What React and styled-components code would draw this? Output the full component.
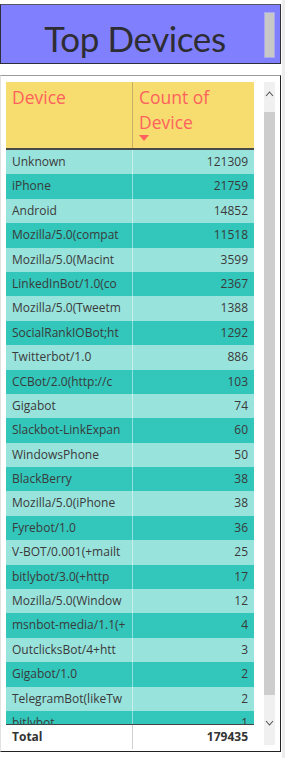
import React from "react";
import styled, { createGlobalStyle } from "styled-components";

const GlobalStyle = createGlobalStyle`
  html, body { margin: 0; padding: 0; background: #fff; }
  body { font-family: "Segoe UI", "Open Sans", "Noto Sans", sans-serif; }
`;

const rows = [
  ["Unknown", 121309],
  ["iPhone", 21759],
  ["Android", 14852],
  ["Mozilla/5.0(compat", 11518],
  ["Mozilla/5.0(Macint", 3599],
  ["LinkedInBot/1.0(co", 2367],
  ["Mozilla/5.0(Tweetm", 1388],
  ["SocialRankIOBot;ht", 1292],
  ["Twitterbot/1.0", 886],
  ["CCBot/2.0(http://c", 103],
  ["Gigabot", 74],
  ["Slackbot-LinkExpan", 60],
  ["WindowsPhone", 50],
  ["BlackBerry", 38],
  ["Mozilla/5.0(iPhone", 38],
  ["Fyrebot/1.0", 36],
  ["V-BOT/0.001(+mailt", 25],
  ["bitlybot/3.0(+http", 17],
  ["Mozilla/5.0(Window", 12],
  ["msnbot-media/1.1(+", 4],
  ["OutclicksBot/4+htt", 3],
  ["Gigabot/1.0", 2],
  ["TelegramBot(likeTw", 2],
  ["bitlybot", 1],
];

const Page = styled.div`
  display: flex;
  width: 287px;
  height: 758px;
  overflow: hidden;
`;

const Main = styled.div`
  width: 281px;
  display: flex;
  flex-direction: column;
  padding-top: 4px;
  gap: 11px;
`;

const EdgeStrip = styled.div`
  width: 3px;
  margin-left: 1px;
  background: #ececec;
`;

const TitleCard = styled.div`
  position: relative;
  box-sizing: border-box;
  height: 60px;
  background: #8080ff;
  border: 1px solid #2f2f3c;
  border-top-color: #55556a;
  display: flex;
  align-items: center;
  justify-content: center;
  padding-right: 11px;
`;

const Title = styled.h1`
  margin: 0;
  margin-top: 7px;
  font-family: "Segoe UI", Lato, "Open Sans", sans-serif;
  font-weight: 400;
  font-size: 35px;
  line-height: 44px;
  letter-spacing: -0.4px;
  color: #2d2d33;
`;

const TitleThumb = styled.div`
  position: absolute;
  right: 5px;
  top: 7px;
  width: 9px;
  height: 44px;
  background: #c8c8c8;
  border: 1px solid #a8a8ee;
`;

const TablePanel = styled.div`
  box-sizing: border-box;
  height: 677px;
  border-top: 1px solid #9a9a9a;
  border-right: 1px solid #222;
  border-bottom: 1px solid #222;
  border-left: 1px solid #e2e2e2;
  padding: 6px 5px 0 5px;
  display: flex;
  gap: 10px;
`;

const Table = styled.div`
  width: 248px;
  display: flex;
  flex-direction: column;
`;

const Grid = styled.div`
  display: grid;
  grid-template-columns: 126px 122px;
`;

const Header = styled(Grid)`
  height: 66px;
  background: #f7dc6f;
  border-bottom: 2px solid #4a4a4a;
`;

const HeadCell = styled.div`
  padding: 3px 6px 0 6px;
  font-size: 17.5px;
  line-height: 24.5px;
  color: #fd625e;
  border-left: ${(p) => (p.$first ? "none" : "1px solid #c4b067")};
`;

const SortArrow = styled.div`
  width: 0;
  height: 0;
  margin-top: 1px;
  border-left: 5px solid transparent;
  border-right: 5px solid transparent;
  border-top: 6px solid #fd625e;
`;

const Body = styled.div`
  height: 574px;
  overflow: hidden;
`;

const Row = styled(Grid)`
  height: 24.4px;
  background: ${(p) => (p.$alt ? "#33c6bb" : "#99e3dd")};
`;

const Cell = styled.div`
  font-size: 12px;
  line-height: 24.4px;
  color: #3a3a3a;
  padding: 0 6px;
  white-space: nowrap;
  overflow: hidden;
  text-align: ${(p) => (p.$num ? "right" : "left")};
  border-left: ${(p) => (p.$num ? "1px solid rgba(255,255,255,0.45)" : "none")};
`;

const TotalRow = styled(Grid)`
  height: 24px;
  border-top: 1px solid #444;
  background: #fff;
`;

const TotalCell = styled.div`
  font-size: 12px;
  font-weight: 700;
  line-height: 24px;
  color: #333;
  padding: 0 6px;
  text-align: ${(p) => (p.$num ? "right" : "left")};
  border-left: ${(p) => (p.$num ? "1px solid #d0d0d0" : "none")};
`;

const ScrollBar = styled.div`
  width: 11px;
  height: 663px;
  display: flex;
  flex-direction: column;
  background: #f0f0f0;
`;

const ArrowBox = styled.div`
  height: ${(p) => p.$h}px;
  display: flex;
  justify-content: center;
  align-items: flex-start;
  padding-top: ${(p) => p.$pt}px;
  box-sizing: border-box;
`;

const Thumb = styled.div`
  height: 583px;
  background: #cdcdcd;
`;

const Chevron = ({ down }) => (
  <svg width="9" height="6" viewBox="0 0 9 6">
    <polyline
      points={down ? "1,1 4.5,5 8,1" : "1,5 4.5,1 8,5"}
      fill="none"
      stroke="#555"
      strokeWidth="1.1"
    />
  </svg>
);

export default function App() {
  return (
    <Page>
      <GlobalStyle />
      <Main>
        <TitleCard>
          <Title>Top Devices</Title>
          <TitleThumb />
        </TitleCard>
        <TablePanel>
          <Table>
            <Header>
              <HeadCell $first>Device</HeadCell>
              <HeadCell>
                Count of
                <br />
                Device
                <SortArrow />
              </HeadCell>
            </Header>
            <Body>
              {rows.map(([name, count], i) => (
                <Row key={i} $alt={i % 2 === 1}>
                  <Cell>{name}</Cell>
                  <Cell $num>{count}</Cell>
                </Row>
              ))}
            </Body>
            <TotalRow>
              <TotalCell>Total</TotalCell>
              <TotalCell $num>179435</TotalCell>
            </TotalRow>
          </Table>
          <ScrollBar>
            <ArrowBox $h={30} $pt={9}>
              <Chevron />
            </ArrowBox>
            <Thumb />
            <ArrowBox $h={50} $pt={25}>
              <Chevron down />
            </ArrowBox>
          </ScrollBar>
        </TablePanel>
      </Main>
      <EdgeStrip />
    </Page>
  );
}
